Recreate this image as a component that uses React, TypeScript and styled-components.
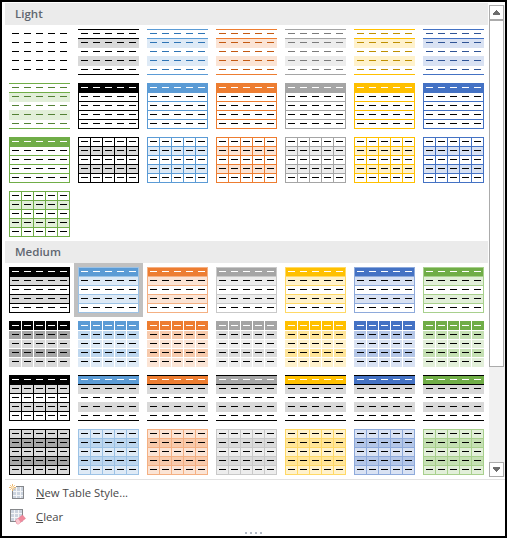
import type { FC } from 'react'
import styled, { createGlobalStyle } from 'styled-components'

const GlobalStyle = createGlobalStyle`
  html, body {
    margin: 0;
    padding: 0;
    background: #fff;
  }
`

interface Accent {
  base: string
  dark: string
  t40: string
  t60: string
  t80: string
}

const BLACK: Accent = { base: '#000000', dark: '#000000', t40: '#000000', t60: '#a6a6a6', t80: '#d9d9d9' }
const ACCENTS: Accent[] = [
  { base: '#5b9bd5', dark: '#2e74b5', t40: '#9cc2e5', t60: '#bdd6ee', t80: '#deeaf6' },
  { base: '#ed7d31', dark: '#c45911', t40: '#f4b083', t60: '#f7caac', t80: '#fbe4d5' },
  { base: '#a5a5a5', dark: '#7b7b7b', t40: '#c9c9c9', t60: '#dbdbdb', t80: '#ededed' },
  { base: '#ffc000', dark: '#bf8f00', t40: '#ffd966', t60: '#ffe599', t80: '#fff2cc' },
  { base: '#4472c4', dark: '#2f5496', t40: '#8eaadb', t60: '#b4c6e7', t80: '#d9e2f3' },
  { base: '#70ad47', dark: '#538135', t40: '#a8d08d', t60: '#c5e0b3', t80: '#e2efd9' }
]
const GREEN = ACCENTS[5]
const ALL = [BLACK, ...ACCENTS]

type Kind = 'plain' | 'lines' | 'header' | 'grid' | 'medium1' | 'medium2' | 'medium3' | 'medium4'

const ROW_TOPS = [0, 9, 18, 27, 36]
const COL_LEFTS = [0, 12, 24, 36, 48]
const W = 61
const H = 46

const Hline: FC<{ y: number; c: string }> = ({ y, c }) => <rect x={0} y={y} width={W} height={1} fill={c} />
const Vline: FC<{ x: number; c: string }> = ({ x, c }) => <rect x={x} y={0} width={1} height={H} fill={c} />
const Band: FC<{ y: number; h: number; c: string }> = ({ y, h, c }) => <rect x={0} y={y} width={W} height={h} fill={c} />

function layers(kind: Kind, a: Accent) {
  const black = a === BLACK
  const rules = (c: string) => [0, 9, 18, 27, 36, 45].map((y) => <Hline key={`h${y}`} y={y} c={c} />)
  const verticals = (c: string, inner = false) =>
    (inner ? [12, 24, 36, 48] : [0, 12, 24, 36, 48, 60]).map((x) => <Vline key={`v${x}`} x={x} c={c} />)

  switch (kind) {
    case 'plain':
      return null
    case 'lines':
      return (
        <>
          <Band y={10} h={9} c={a.t80} />
          <Band y={27} h={10} c={a.t80} />
          <Hline y={0} c={a.base} />
          <Hline y={9} c={a.base} />
          <Hline y={45} c={a.base} />
        </>
      )
    case 'header':
      return (
        <>
          <Band y={0} h={9} c={a.base} />
          {rules(a.base)}
          <Vline x={0} c={a.base} />
          <Vline x={60} c={a.base} />
        </>
      )
    case 'grid':
      return (
        <>
          <Band y={9} h={9} c={a.t80} />
          <Band y={27} h={9} c={a.t80} />
          {rules(a.base)}
          {verticals(a.base)}
        </>
      )
    case 'medium1':
      return (
        <>
          <Band y={9} h={9} c={a.t80} />
          <Band y={27} h={9} c={a.t80} />
          {rules(a.t40)}
          <Vline x={0} c={a.t40} />
          <Vline x={60} c={a.t40} />
          <rect x={1} y={1} width={59} height={8} fill={a.base} />
        </>
      )
    case 'medium2':
      return (
        <>
          <Band y={0} h={9} c={a.base} />
          <Band y={10} h={8} c={a.t60} />
          <Band y={19} h={8} c={a.t80} />
          <Band y={28} h={8} c={a.t60} />
          <Band y={37} h={9} c={a.t80} />
          {[9, 18, 27, 36].map((y) => (
            <Hline key={y} y={y} c="#ffffff" />
          ))}
          {verticals('#ffffff', true)}
        </>
      )
    case 'medium3':
      return black ? (
        <>
          <Band y={9} h={9} c={a.t80} />
          <Band y={27} h={9} c={a.t80} />
          {rules('#000000')}
          {verticals('#000000')}
          <Band y={0} h={9} c="#000000" />
        </>
      ) : (
        <>
          <Band y={0} h={9} c={a.base} />
          <Band y={10} h={9} c="#d9d9d9" />
          <Band y={27} h={10} c="#d9d9d9" />
          <Hline y={0} c="#000000" />
          <Hline y={9} c="#000000" />
          <Hline y={45} c="#000000" />
        </>
      )
    case 'medium4':
      return (
        <>
          <Band y={0} h={9} c={a.t80} />
          <Band y={9} h={9} c={a.t60} />
          <Band y={18} h={9} c={a.t80} />
          <Band y={27} h={9} c={a.t60} />
          <Band y={36} h={10} c={a.t80} />
          {rules(a.t40)}
          {verticals(a.t40)}
        </>
      )
  }
}

const Swatch: FC<{ kind: Kind; accent: Accent }> = ({ kind, accent }) => {
  const dashColor = (row: number) => {
    if (row === 0 && ['header', 'medium1', 'medium2', 'medium3'].includes(kind)) return '#ffffff'
    if (kind === 'lines') return accent.dark
    return '#000000'
  }
  return (
    <svg width={W} height={H} viewBox={`0 0 ${W} ${H}`} shapeRendering="crispEdges">
      {layers(kind, accent)}
      {ROW_TOPS.map((top, r) =>
        COL_LEFTS.map((left) => <rect key={`${r}-${left}`} x={left + 3} y={top + 4} width={7} height={1} fill={dashColor(r)} />)
      )}
    </svg>
  )
}

interface Style {
  kind: Kind
  accent: Accent
}

const row = (kind: Kind): Style[] => ALL.map((accent) => ({ kind, accent }))

const LIGHT: Style[] = [
  { kind: 'plain', accent: BLACK },
  ...row('lines').slice(0, 6),
  { kind: 'lines', accent: GREEN },
  ...row('header').slice(0, 6),
  { kind: 'header', accent: GREEN },
  ...row('grid').slice(0, 6),
  { kind: 'grid', accent: GREEN }
]

const MEDIUM: Style[] = [...row('medium1'), ...row('medium2'), ...row('medium3'), ...row('medium4')]

const SparkleGridIcon = () => (
  <svg width={17} height={18} viewBox="0 0 17 18">
    <g shapeRendering="crispEdges">
      <rect x={3} y={4} width={12} height={12} fill="#cbd3de" />
      <path d="M7.5 4v12M11.5 4v12M3 8.5h12M3 12.5h12" stroke="#f4f5f7" strokeWidth={1} fill="none" />
      <path d="M3 15.5h12M14.5 3v13M3.5 8v8M7 3.5h8" stroke="#85878a" strokeWidth={1} fill="none" />
    </g>
    <path d="M3.5 1v7M0 4.5h7M1.2 2.2l4.6 4.6M5.8 2.2L1.2 6.8" stroke="#efbb72" strokeWidth={1} fill="none" />
    <circle cx={3.5} cy={4.5} r={1.4} fill="#fbe6c4" />
  </svg>
)

const EraserGridIcon = () => (
  <svg width={17} height={18} viewBox="0 0 17 18">
    <g shapeRendering="crispEdges">
      <rect x={1} y={2} width={13} height={13} fill="#cbd3de" />
      <path d="M5.5 2v13M9.5 2v13M1 6.5h13M1 10.5h13" stroke="#f4f5f7" strokeWidth={1} fill="none" />
      <path d="M1.5 2v13M1 2.5h13M13.5 2v7M1 14.5h6" stroke="#85878a" strokeWidth={1} fill="none" />
    </g>
    <path d="M6.5 13.5l7-5.5 3 3.5-7 5.5h-1.5z" fill="#f08a9c" stroke="#e87188" strokeWidth={0.5} />
    <path d="M6.5 13.5l2.5-2 2.5 3.5-2 2h-1z" fill="#f9c9d1" />
  </svg>
)

const ArrowIcon: FC<{ down?: boolean }> = ({ down }) => (
  <svg width={7} height={5} viewBox="0 0 7 5" shapeRendering="crispEdges">
    {down ? (
      <path d="M0 0h7v1H0zM0 1h7v1H0zM1 2h5v1H1zM2 3h3v1H2zM3 4h1v1H3z" fill="#6d6d6d" />
    ) : (
      <path d="M3 0h1v1H3zM2 1h3v1H2zM1 2h5v1H1zM0 3h7v1H0zM0 4h7v1H0z" fill="#6d6d6d" />
    )}
  </svg>
)

const Panel = styled.div`
  box-sizing: border-box;
  width: 507px;
  height: 538px;
  border: 2px solid #000;
  padding: 1px 0 0 3px;
  background: #fff;
  display: flex;
  flex-direction: column;
  font-family: 'Open Sans', 'Liberation Sans', sans-serif;
`

const Gallery = styled.div`
  display: flex;
  height: 476px;
  gap: 1px;
`

const List = styled.div`
  width: 483px;
`

const SectionTitle = styled.div`
  height: 22px;
  line-height: 22px;
  padding-left: 10px;
  background: #ebebeb;
  color: #5f6670;
  font-size: 11.5px;
  font-weight: 600;
`

const StyleGrid = styled.div`
  display: grid;
  grid-template-columns: repeat(7, 69px);
  grid-auto-rows: 54px;
`

const StyleItem = styled.div<{ $selected?: boolean }>`
  box-sizing: border-box;
  padding: 4px;
  background: ${({ $selected }) => ($selected ? '#c0c0c0' : 'transparent')};
  svg {
    display: block;
    background: #fff;
  }
`

const Scrollbar = styled.div`
  width: 16px;
  margin-bottom: 2px;
  display: flex;
  flex-direction: column;
  background: #f1f1f1;
`

const ScrollButton = styled.div`
  box-sizing: border-box;
  flex: none;
  width: 15px;
  height: 15px;
  background: #fff;
  border: 1px solid #ababab;
  display: flex;
  align-items: center;
  justify-content: center;
`

const ScrollTop = styled.div`
  height: 2px;
  background: #fff;
`

const ScrollThumb = styled.div`
  box-sizing: border-box;
  width: 15px;
  height: 347px;
  background: #fff;
  border: 1px solid #ababab;
`

const ScrollTrack = styled.div`
  flex: 1;
`

const Footer = styled.div`
  flex: 1;
  border-top: 1px solid #e2e2e2;
  position: relative;
  padding: 0 0 0 4px;
`

const MenuItem = styled.div`
  height: 24px;
  display: flex;
  align-items: center;
  gap: 10px;
  color: #484848;
  font-size: 11.3px;
  svg {
    flex: none;
  }
`

const Key = styled.span`
  text-decoration: underline;
`

const Grip = styled.div`
  position: absolute;
  left: 240px;
  bottom: 2px;
  display: flex;
  gap: 3px;
`

const GripDot = styled.span`
  width: 2px;
  height: 2px;
  background: #b3bac6;
`

const Section: FC<{ title: string; styles: Style[]; selected?: number }> = ({ title, styles, selected }) => (
  <>
    <SectionTitle>{title}</SectionTitle>
    <StyleGrid>
      {styles.map((s, i) => (
        <StyleItem key={i} $selected={i === selected}>
          <Swatch kind={s.kind} accent={s.accent} />
        </StyleItem>
      ))}
    </StyleGrid>
  </>
)

export default function App() {
  return (
    <>
      <GlobalStyle />
      <Panel>
        <Gallery>
          <List>
            <Section title="Light" styles={LIGHT} />
            <Section title="Medium" styles={MEDIUM} selected={1} />
          </List>
          <Scrollbar>
            <ScrollTop />
            <ScrollButton>
              <ArrowIcon />
            </ScrollButton>
            <ScrollThumb />
            <ScrollTrack />
            <ScrollButton>
              <ArrowIcon down />
            </ScrollButton>
          </Scrollbar>
        </Gallery>
        <Footer>
          <MenuItem>
            <SparkleGridIcon />
            <span>
              <Key>N</Key>ew Table Style...
            </span>
          </MenuItem>
          <MenuItem>
            <EraserGridIcon />
            <span>
              <Key>C</Key>lear
            </span>
          </MenuItem>
          <Grip>
            <GripDot />
            <GripDot />
            <GripDot />
            <GripDot />
          </Grip>
        </Footer>
      </Panel>
    </>
  )
}
